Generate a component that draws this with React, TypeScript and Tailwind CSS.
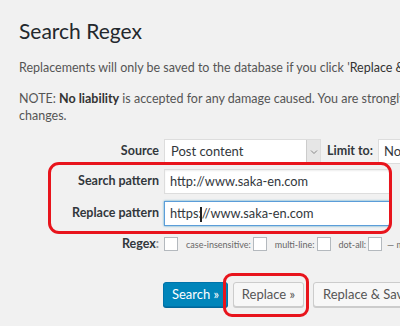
import React from "react";

const font = { fontFamily: 'Lato, "Noto Sans", Arial, sans-serif' };

function Check() {
  return <span className="inline-block w-[14px] h-[14px] bg-white border border-[#b4b9be] shrink-0" />;
}

export default function App() {
  return (
    <div className="relative w-[400px] h-[326px] bg-[#f1f1f1] overflow-hidden text-[#444]" style={font}>
      <div className="pl-[19px] pt-[16px] whitespace-nowrap">
        <h1 className="text-[21px] leading-[30px] text-[#23282d] font-normal">Search Regex</h1>
        <p className="mt-[13px] text-[12.5px] leading-[17px] text-[#555]">
          Replacements will only be saved to the database if you click '<span className="text-[#333]">Replace &amp; Save</span>'
        </p>
        <p className="mt-[14px] text-[12.5px] leading-[17px] text-[#555]">
          NOTE: <b className="font-bold text-[#333]">No liability</b> is accepted for any damage caused. You are strongly advised
          <br />
          changes.
        </p>
      </div>

      <div className="mt-[15px] grid grid-cols-[159px_1fr] gap-x-[5px] items-center whitespace-nowrap">
        <div className="text-right text-[12.5px] font-bold text-[#32373c]">Source</div>
        <div className="flex items-center h-[25px]">
          <div className="flex items-center h-[25px] w-[157px] shrink-0 bg-white border border-[#ddd]">
            <span className="pl-[6px] text-[13px] text-[#32373c] flex-1">Post content</span>
            <span className="w-[14px] h-full bg-[#e6e6e6] border-l border-[#ccc] flex items-center justify-center">
              <svg width="8" height="6" viewBox="0 0 8 6"><path d="M1 1.5 L4 4.5 L7 1.5" stroke="#888" strokeWidth="1" fill="none" /></svg>
            </span>
          </div>
          <span className="ml-[6px] text-[12.5px] font-bold text-[#32373c]">Limit to:</span>
          <div className="ml-[5px] h-[25px] w-[60px] shrink-0 bg-white border border-[#ddd] pl-[5px] text-[13px] leading-[23px] text-[#32373c]">No limit</div>
        </div>

        <div className="mt-[5px] text-right text-[12.5px] font-bold text-[#32373c]">Search pattern</div>
        <div className="mt-[5px] h-[25px] w-[226px] bg-white border border-[#ddd] shadow-[inset_0_1px_2px_rgba(0,0,0,0.07)] pl-[5px] text-[12.8px] leading-[23px] text-[#32373c]">
          http://www.saka-en.com
        </div>

        <div className="mt-[7px] text-right text-[12.5px] font-bold text-[#32373c]">Replace pattern</div>
        <div className="relative mt-[7px] h-[25px] w-[226px] bg-white border border-[#5b9dd9] shadow-[0_0_2px_rgba(30,140,190,0.8)] pl-[5px] text-[12.8px] leading-[23px] text-[#32373c]">
          https://www.saka-en.com
          <span className="absolute left-[35px] top-[5px] w-[2px] h-[15px] bg-[#222]" />
        </div>

        <div className="mt-[9px] text-right text-[12.5px] font-bold text-[#32373c]">Regex<span className="text-[#999]">:</span></div>
        <div className="mt-[9px] flex items-center text-[9px] text-[#666]">
          <Check />
          <span className="ml-[8px] mr-[2px]">case-insensitive:</span>
          <Check />
          <span className="ml-[8px] mr-[2px]">multi-line:</span>
          <Check />
          <span className="ml-[8px] mr-[2px]">dot-all:</span>
          <Check />
          <span className="ml-[5px]">— match</span>
        </div>
      </div>

      <div className="mt-[28px] ml-[163px] flex items-center whitespace-nowrap text-[13px]">
        <button className="shrink-0 h-[25px] w-[65px] rounded-[3px] bg-[#0085ba] border border-[#0073aa] text-white shadow-[0_1px_0_#006799]">Search »</button>
        <button className="shrink-0 ml-[5px] h-[25px] w-[71px] rounded-[3px] bg-[#f7f7f7] border border-[#ccc] text-[#555] shadow-[0_1px_0_#ccc]">Replace »</button>
        <button className="shrink-0 ml-[9px] h-[25px] px-[9px] rounded-[3px] bg-[#f7f7f7] border border-[#ccc] text-[#555] shadow-[0_1px_0_#ccc]">Replace &amp; Save »</button>
      </div>

      <div className="absolute left-[48px] top-[162px] w-[344px] h-[72px] rounded-[11px] border-[3px] border-[#e8141c]" />
      <div className="absolute left-[223px] top-[273px] w-[86px] h-[44px] rounded-[9px] border-[3px] border-[#e8141c]" />
    </div>
  );
}
